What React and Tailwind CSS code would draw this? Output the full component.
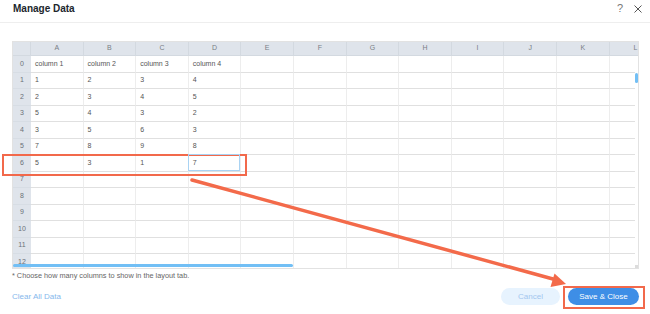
import React from 'react'

const COLS = ['A', 'B', 'C', 'D', 'E', 'F', 'G', 'H', 'I', 'J', 'K', 'L']

const DATA = [
  ['column 1', 'column 2', 'column 3', 'column 4'],
  ['1', '2', '3', '4'],
  ['2', '3', '4', '5'],
  ['5', '4', '3', '2'],
  ['3', '5', '6', '3'],
  ['7', '8', '9', '8'],
  ['5', '3', '1', '7'],
  [], [], [], [], [], [],
]

function HeaderRow() {
  return (
    <div className="flex h-[14px] bg-[#dfe4eb] border-b border-[#d3d9e0] shrink-0">
      <div className="w-[18px] shrink-0 border-r border-[#d3d9e0]" />
      {COLS.map((c) => (
        <div
          key={c}
          className="w-[52.6px] shrink-0 border-r border-[#d3d9e0] flex items-center justify-center text-[7px] text-[#7a7f86]"
        >
          {c}
        </div>
      ))}
    </div>
  )
}

function DataRow({ index, cells }) {
  return (
    <div className="flex h-[16.5px] shrink-0">
      <div className="w-[18px] shrink-0 bg-[#dfe4eb] border-b border-[#d7dde4] flex items-center justify-center text-[7px] text-[#6b7178]">
        {index}
      </div>
      {COLS.map((c, i) => {
        const selected = index === 6 && i === 3
        return (
          <div
            key={c}
            className="w-[52.6px] shrink-0 border-r border-b border-r-[#ededed] border-b-[#e0e0e0] relative flex items-center pl-[4px] text-[7px] text-[#555]"
          >
            {cells[i] || ''}
            {selected && (
              <div className="absolute -top-px -left-px right-0 bottom-0 z-10 border border-[#a9d3f3]" />
            )}
          </div>
        )
      })}
    </div>
  )
}

export default function App() {
  return (
    <div
      className="relative w-[650px] h-[314px] bg-white overflow-hidden flex flex-col"
      style={{ fontFamily: '"Liberation Sans", Arial, sans-serif' }}
    >
      {/* title bar */}
      <div className="h-[23px] shrink-0 border-b border-[#eeeeee] flex items-center justify-between pl-[13px] pr-[8px]">
        <h1 className="text-[10px] font-bold text-[#20262c] -mt-[5px]">Manage Data</h1>
        <div className="flex items-center gap-[11px] -mt-[5px]">
          <span className="text-[11px] text-[#777]">?</span>
          <svg width="8" height="8" viewBox="0 0 8 8" className="text-[#555]">
            <path d="M0.5 0.5 L7.5 7.5 M7.5 0.5 L0.5 7.5" stroke="currentColor" strokeWidth="1" />
          </svg>
        </div>
      </div>

      {/* sheet */}
      <div className="relative ml-[12px] mt-[18px] w-[627px] h-[228px] shrink-0 border border-[#e2e2e2] overflow-hidden flex flex-col">
        <HeaderRow />
        <div className="w-[622px] overflow-hidden flex flex-col">
          {DATA.map((cells, i) => (
            <DataRow key={i} index={i} cells={cells} />
          ))}
        </div>
        {/* vertical scrollbar */}
        <div className="absolute right-0 top-[14px] bottom-0 w-[3px] bg-white" />
        <div className="absolute right-0 top-[31px] w-[3px] h-[10px] rounded-full bg-[#72bff5]" />
        {/* horizontal scrollbar */}
        <div className="absolute left-0 bottom-[1px] w-[280px] h-[3px] rounded-full bg-[#72bff5]" />
        <div className="absolute right-0 bottom-0 w-[3px] h-[3px] bg-[#dcdcdc]" />
      </div>

      <p className="ml-[12px] mt-[2px] text-[7.3px] leading-[10px] text-[#666]">
        * Choose how many columns to show in the layout tab.
      </p>

      <div className="mt-[7px] ml-[12px] mr-[11px] flex items-center justify-between">
        <button className="text-[8px] text-[#86b8ec]">Clear All Data</button>
        <div className="flex items-center gap-[8px]">
          <button className="w-[59px] h-[17px] rounded-full bg-[#e7f3fe] text-[8px] text-[#a3c7ef]">
            Cancel
          </button>
          <button className="w-[71px] h-[17px] rounded-full bg-[#3e8ee6] text-[8px] text-white">
            Save &amp; Close
          </button>
        </div>
      </div>

      {/* annotations */}
      <div className="absolute left-[2px] top-[154px] w-[245px] h-[22px] border-2 border-[#f2694b]" />
      <div className="absolute left-[563px] top-[286px] w-[82px] h-[23px] border-2 border-[#f2694b]" />
      <svg className="absolute left-0 top-0 pointer-events-none" width="650" height="314">
        <line x1="192" y1="180" x2="553" y2="279" stroke="#f36a4a" strokeWidth="3.5" strokeLinecap="round" />
        <polygon points="566,284 554.5,273.5 550.5,287" fill="#f36a4a" />
      </svg>
    </div>
  )
}
